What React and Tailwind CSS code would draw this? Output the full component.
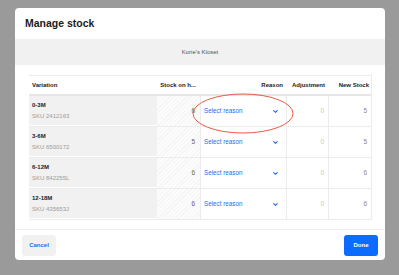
import React from 'react';

const rows = [
  { name: '0-3M', sku: 'SKU 2412163', stock: 6, adj: 0, next: 5 },
  { name: '3-6M', sku: 'SKU 6500172', stock: 5, adj: 0, next: 5 },
  { name: '6-12M', sku: 'SKU 842255L', stock: 6, adj: 0, next: 6 },
  { name: '12-18M', sku: 'SKU 435653J', stock: 6, adj: 0, next: 6 },
];

const cols = 'grid grid-cols-[128px_43px_86px_42px_44px]';

function Chevron() {
  return (
    <svg width="5" height="3" viewBox="0 0 5 3" className="text-[#1a6ff0]">
      <polyline points="0.7,0.6 2.5,2.3 4.3,0.6" fill="none" stroke="currentColor" strokeWidth="1.1" strokeLinecap="round" strokeLinejoin="round" />
    </svg>
  );
}

export default function App() {
  return (
    <div className="h-[275px] w-[399px] bg-[#9a9a9a] pt-[8px] pl-[15px] font-['Liberation_Sans',Arial,sans-serif] overflow-hidden">
      <div className="relative w-[370px] h-[252px] bg-white rounded-[4px] flex flex-col">
        <div className="h-[31px] flex items-center pl-[10px] pt-[1px]">
          <h1 className="text-[10.5px] font-bold text-[#1c1c1c]">Manage stock</h1>
        </div>
        <div className="h-[26px] bg-[#f1f1f1] flex items-center justify-center">
          <span className="text-[6px] text-[#555]">Korie's Kloset</span>
        </div>

        <div className="mt-[10px] ml-[14px] w-[343px] border-t border-r border-[#ececec]">
          <div className={`${cols} h-[20px] items-center border-b-2 border-[#e6e6e6] text-[6px] font-bold text-[#222]`}>
            <div className="pl-[3px]">Variation</div>
            <div className="text-right pr-[4px]">Stock on h...</div>
            <div className="text-right pr-[3px]">Reason</div>
            <div className="text-right pr-[3px]">Adjustment</div>
            <div className="text-right pr-[3px]">New Stock</div>
          </div>
          {rows.map((r) => (
            <div key={r.name} className={`${cols} h-[31px] border-b border-[#ececec]`}>
              <div className="bg-[#f1f1f1] border-b border-white flex flex-col justify-center pl-[3px] gap-[2px]">
                <span className="text-[6px] font-bold text-[#222]">{r.name}</span>
                <span className="text-[6px] text-[#9a9a9a]">{r.sku}</span>
              </div>
              <div className="bg-[repeating-linear-gradient(135deg,#f5f5f5_0px,#f5f5f5_1px,#fcfcfc_1px,#fcfcfc_3px)] flex items-center justify-end pr-[5px] text-[6.5px] text-[#666]">
                {r.stock}
              </div>
              <div className="border-l border-[#ececec] flex items-center justify-between pl-[3px] pr-[8px]">
                <span className="text-[6.3px] text-[#1a6ff0]">Select reason</span>
                <Chevron />
              </div>
              <div className="border-l border-[#ececec] flex items-center justify-end pr-[4px] text-[6.5px] text-[#c8c8c8]">
                {r.adj}
              </div>
              <div className="border-l border-[#ececec] flex items-center justify-end pr-[5px] text-[6.5px] text-[#888]">
                {r.next}
              </div>
            </div>
          ))}
        </div>

        <div className="mt-auto border-t border-[#f0f0f0] flex items-center justify-between px-[7px] pt-[5px] pb-[4px]">
          <button className="w-[34px] h-[21px] rounded-[3px] bg-[#f1f1f1] text-[6px] font-bold text-[#1a6ff0]">Cancel</button>
          <button className="w-[34px] h-[21px] rounded-[3px] bg-[#0b6cff] text-[6px] font-bold text-white">Done</button>
        </div>

        <svg className="absolute left-[177px] top-[85px] pointer-events-none" width="102" height="41" viewBox="0 0 102 41">
          <ellipse cx="51" cy="20.5" rx="50" ry="19.5" fill="none" stroke="#ec5a45" strokeWidth="1" />
        </svg>
      </div>
    </div>
  );
}
